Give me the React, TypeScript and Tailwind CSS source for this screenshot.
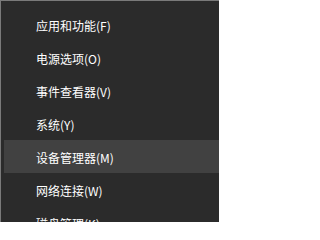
import React from "react";

const items = [
  "应用和功能(F)",
  "电源选项(O)",
  "事件查看器(V)",
  "系统(Y)",
  "设备管理器(M)",
  "网络连接(W)",
  "磁盘管理(K)",
];

export default function App() {
  return (
    <div
      className="w-[219px] h-[222px] overflow-hidden bg-[#2b2b2b] border-t border-l border-[#7a7a7a] pt-[7px] pl-[3px]"
      style={{ fontFamily: '"Noto Sans CJK SC", "Noto Sans", sans-serif' }}
    >
      <div className="flex flex-col">
        {items.map((t, i) => (
          <div
            key={t}
            className={
              i === 4
                ? "h-[33px] shrink-0 flex items-center pl-[32px] pt-[3px] text-[12px] text-white bg-[#414141]"
                : "h-[33px] shrink-0 flex items-center pl-[32px] pt-[3px] text-[12px] text-white"
            }
          >
            {t}
          </div>
        ))}
      </div>
    </div>
  );
}
